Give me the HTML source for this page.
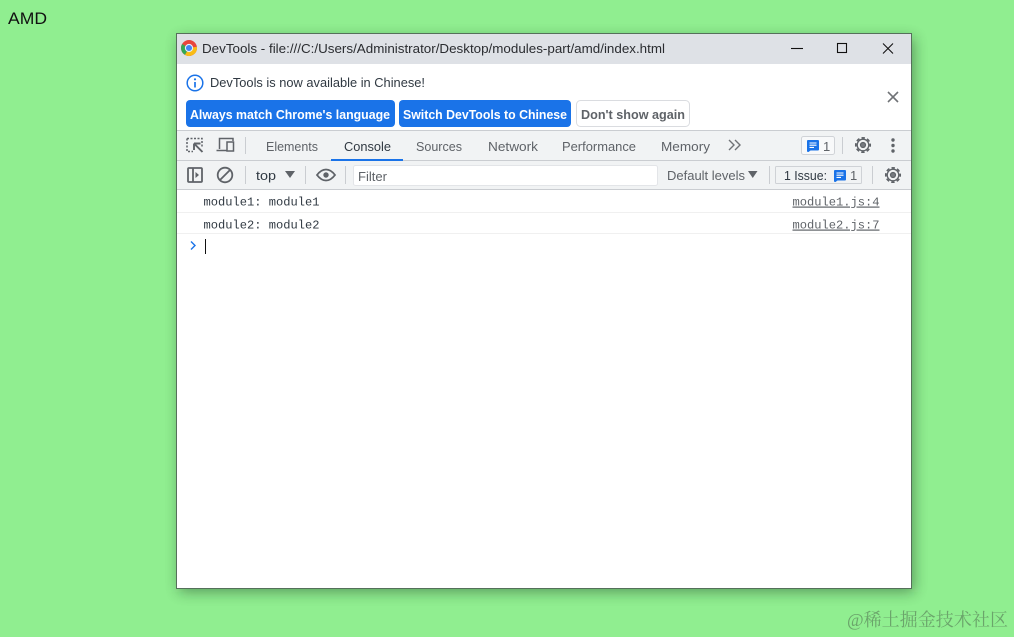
<!DOCTYPE html>
<html><head><meta charset="utf-8"><title>AMD</title>
<style>
html,body{margin:0;padding:0;width:1014px;height:637px;overflow:hidden;background:#90ee90}
svg{display:block;position:absolute;left:0;top:0}
text{font-family:"Liberation Sans","Noto Sans CJK SC",sans-serif;font-size:13px;fill:#303942}
.m{font-family:"Liberation Mono",monospace;font-size:12px;fill:#303942}
.g{fill:none;stroke:#5f6368;stroke-width:1.8}
</style></head><body>
<svg width="1014" height="637" viewBox="0 0 1014 637" xmlns="http://www.w3.org/2000/svg">
<defs>
<filter id="s" x="-10%" y="-10%" width="120%" height="120%"><feGaussianBlur stdDeviation="7"/></filter>
<g id="gear"><circle r="5.800" fill="none" stroke="#5f6368" stroke-width="1.300"/><circle r="7.200" fill="none" stroke="#5f6368" stroke-width="1.700" stroke-dasharray="3.400 2.255" stroke-dashoffset="1.700"/><circle r="2.500" fill="#777b80" stroke="#5f6368" stroke-width="1.200"/></g>
<g id="msg"><path d="M1 0h10a1 1 0 0 1 1 1v8.500a1 1 0 0 1-1 1H3.500L1.500 12H1a1 1 0 0 1-1-1V1a1 1 0 0 1 1-1z" fill="#1a73e8"/><path d="M2.500 3h7M2.500 5.200h7M2.500 7.400h4.500" stroke="#fff" stroke-width="1.100"/></g>
</defs>

<text x="8" y="24" style="font-size:17px;fill:#111" textLength="39" lengthAdjust="spacingAndGlyphs">AMD</text>

<rect x="179" y="38" width="735" height="554" fill="#14301a" opacity=".45" filter="url(#s)"/>
<rect x="176.500" y="33.500" width="735" height="555" fill="#fff" stroke="#55705a"/>
<rect x="177" y="34" width="734" height="30" fill="#dee1e6"/>

<!-- chrome logo -->
<circle cx="189" cy="48" r="8" fill="#e8453c"/>
<path d="M189 48 182.100 44A8 8 0 0 0 185 54.900z" fill="#34a853"/>
<path d="M189 48 185 54.900A8 8 0 0 0 196.900 46.700z" fill="#f9bc15"/>
<circle cx="189" cy="48" r="3.600" fill="#4285f4" stroke="#e8eef8" stroke-width="1.100"/>

<text x="202" y="53" textLength="463" lengthAdjust="spacingAndGlyphs" style="fill:#2a2c30">DevTools - file:///C:/Users/Administrator/Desktop/modules-part/amd/index.html</text>

<!-- window controls -->
<path d="M791 48.500h12" stroke="#111" stroke-width="1.100"/>
<rect x="837.500" y="43.500" width="9" height="9" fill="none" stroke="#111" stroke-width="1.100"/>
<path d="M883 43.500l10 10M893 43.500l-10 10" stroke="#111" stroke-width="1.100"/>

<!-- infobar -->
<circle cx="195" cy="83" r="7.800" fill="none" stroke="#1a73e8" stroke-width="1.500"/>
<circle cx="195" cy="79.300" r="1.100" fill="#1a73e8"/>
<path d="M195 82v5.500" stroke="#1a73e8" stroke-width="1.700"/>
<text x="210" y="87" textLength="215" lengthAdjust="spacingAndGlyphs" style="fill:#303942">DevTools is now available in Chinese!</text>

<rect x="186" y="100" width="209" height="27" rx="4" fill="#1a73e8"/>
<text x="190" y="119" textLength="200" lengthAdjust="spacingAndGlyphs" style="fill:#fff;font-weight:bold">Always match Chrome's language</text>
<rect x="399" y="100" width="172" height="27" rx="4" fill="#1a73e8"/>
<text x="403" y="119" textLength="164" lengthAdjust="spacingAndGlyphs" style="fill:#fff;font-weight:bold">Switch DevTools to Chinese</text>
<rect x="576.500" y="100.500" width="113" height="26" rx="4" fill="#fff" stroke="#dadce0"/>
<text x="581" y="119" textLength="104" lengthAdjust="spacingAndGlyphs" style="fill:#5f6368;font-weight:bold">Don't show again</text>
<path d="M888 92l10 10M898 92l-10 10" stroke="#6f7276" stroke-width="1.600"/>

<!-- tab bar -->
<rect x="177" y="131" width="734" height="59" fill="#f1f3f4"/>
<path d="M177 130.500h734M177 160.500h734M177 189.500h734" stroke="#cacdd1"/>
<path d="M187 138.500h15v8M187 138.500v13h6" fill="none" stroke="#5f6368" stroke-width="1.500" stroke-dasharray="2 1.500"/>
<path d="M194 143.500l8.500 8.500M194 143.500v6.500M194 143.500h6.500" fill="none" stroke="#5f6368" stroke-width="1.900"/>
<path d="M219.500 149v-10.500h13.500v2.500M216.500 150.500h10" fill="none" stroke="#5f6368" stroke-width="1.500"/>
<rect x="227" y="142" width="6.500" height="9" fill="none" stroke="#5f6368" stroke-width="1.500"/>
<path d="M245.500 137v17" stroke="#cacdd1"/>
<text x="266" y="151" textLength="52" lengthAdjust="spacingAndGlyphs" style="fill:#5f6368">Elements</text>
<text x="344" y="151" textLength="47" lengthAdjust="spacingAndGlyphs" style="fill:#303942">Console</text>
<rect x="331" y="159" width="72" height="2" fill="#1a73e8"/>
<text x="416" y="151" textLength="46" lengthAdjust="spacingAndGlyphs" style="fill:#5f6368">Sources</text>
<text x="488" y="151" textLength="50" lengthAdjust="spacingAndGlyphs" style="fill:#5f6368">Network</text>
<text x="562" y="151" textLength="74" lengthAdjust="spacingAndGlyphs" style="fill:#5f6368">Performance</text>
<text x="661" y="151" textLength="49" lengthAdjust="spacingAndGlyphs" style="fill:#5f6368">Memory</text>
<path d="M729 140l5 5-5 5M735 140l5 5-5 5" fill="none" stroke="#6f7276" stroke-width="1.400"/>

<rect x="801.500" y="136.500" width="33" height="18" rx="2" fill="#f8f9fa" stroke="#d0d3d7"/>
<use href="#msg" x="807" y="140"/>
<text x="823" y="151" style="fill:#5f6368">1</text>
<path d="M842.500 137v17" stroke="#cacdd1"/>
<use href="#gear" x="863" y="145"/>
<circle cx="893" cy="140" r="1.700" fill="#5f6368"/><circle cx="893" cy="145.500" r="1.700" fill="#5f6368"/><circle cx="893" cy="151" r="1.700" fill="#5f6368"/>

<!-- console toolbar -->
<rect x="188" y="168" width="14" height="14" rx="1" class="g"/>
<path d="M193 168v14" class="g"/>
<path d="M195.500 172v6l3.500-3z" fill="#5f6368"/>
<circle cx="225" cy="175" r="7.300" class="g"/>
<path d="M220 180l10-10" class="g"/>
<path d="M245.500 166v18" stroke="#cacdd1"/>
<text x="256" y="180" textLength="20" lengthAdjust="spacingAndGlyphs" style="fill:#303942">top</text>
<path d="M285 171h10l-5 7z" fill="#5f6368"/>
<path d="M305.500 166v18" stroke="#cacdd1"/>
<path d="M317 175c3-4 6-5.500 9-5.500s6 1.500 9 5.500c-3 4-6 5.500-9 5.500s-6-1.500-9-5.500z" class="g"/>
<circle cx="326" cy="175" r="2.700" fill="#5f6368"/>
<path d="M345.500 166v18" stroke="#cacdd1"/>
<rect x="353.500" y="165.500" width="304" height="20" rx="2" fill="#fff" stroke="#e3e5e8"/>
<text x="358" y="181" textLength="29" lengthAdjust="spacingAndGlyphs" style="fill:#5f6368">Filter</text>
<text x="667" y="180" textLength="78" lengthAdjust="spacingAndGlyphs" style="fill:#5f6368">Default levels</text>
<path d="M748 171h9.500l-4.750 7z" fill="#5f6368"/>
<path d="M769.500 166v18" stroke="#cacdd1"/>
<rect x="775.500" y="166.500" width="86" height="17" rx="1" fill="#f1f3f4" stroke="#cfd2d6"/>
<text x="784" y="180" textLength="43" lengthAdjust="spacingAndGlyphs" style="fill:#303942">1 Issue:</text>
<use href="#msg" x="834" y="170"/>
<text x="850" y="180" style="fill:#5f6368">1</text>
<path d="M872.500 166v18" stroke="#cacdd1"/>
<use href="#gear" x="893" y="175"/>

<!-- console -->
<text class="m" x="203.500" y="205.500" textLength="116" lengthAdjust="spacingAndGlyphs">module1: module1</text>
<path d="M177 212.500h734" stroke="#f0f0f0"/>
<text class="m" x="203.500" y="228.500" textLength="116" lengthAdjust="spacingAndGlyphs">module2: module2</text>
<path d="M177 233.500h734" stroke="#f0f0f0"/>
<text class="m" x="792.500" y="205.500" textLength="87" lengthAdjust="spacingAndGlyphs" style="fill:#5f6368;text-decoration:underline">module1.js:4</text>
<text class="m" x="792.500" y="228.500" textLength="87" lengthAdjust="spacingAndGlyphs" style="fill:#5f6368;text-decoration:underline">module2.js:7</text>
<path d="M191 241.500l4 4-4 4" fill="none" stroke="#1a73e8" stroke-width="1.400"/>
<path d="M205.500 239v15" stroke="#111" stroke-width="1"/>

<text x="847" y="626" textLength="161" lengthAdjust="spacingAndGlyphs" style="font-size:18px;fill:#6ba56b;font-family:'Liberation Serif','Noto Serif CJK SC',serif">@稀土掘金技术社区</text>
</svg>
</body></html>
